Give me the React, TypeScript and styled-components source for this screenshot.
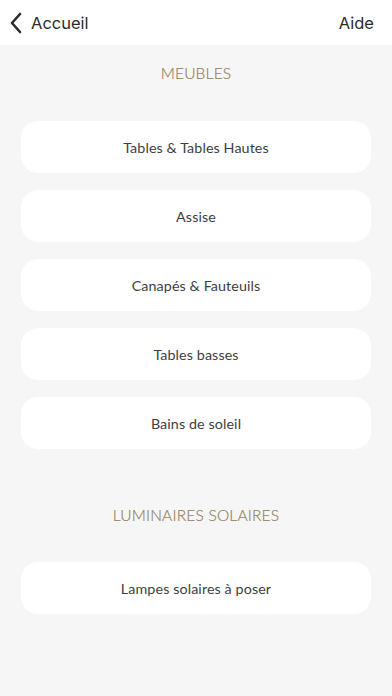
import React from "react";
import styled, { createGlobalStyle } from "styled-components";

const Global = createGlobalStyle`
  html, body { margin: 0; padding: 0; background: #f6f6f6; }
  body { font-family: "Open Sans", "Liberation Sans", sans-serif; }
  * { box-sizing: border-box; }
`;

const Page = styled.div`
  width: 392px;
  min-height: 696px;
  background: #f6f6f6;
  display: flex;
  flex-direction: column;
`;

const NavBar = styled.header`
  height: 45px;
  background: #ffffff;
  display: flex;
  align-items: center;
  justify-content: space-between;
  padding: 0 18px 0 9px;
  font-family: Inter, Roboto, "Liberation Sans", sans-serif;
  font-size: 16.5px;
  color: #2b2b2b;
`;

const BackButton = styled.div`
  display: flex;
  align-items: center;
  gap: 8px;
`;

const Section = styled.section<{ $top: number }>`
  display: flex;
  flex-direction: column;
  align-items: center;
  padding: ${(p) => p.$top}px 21px 0;
`;

const SectionTitle = styled.h2`
  margin: 0;
  height: 20px;
  line-height: 20px;
  font-family: Lato, "Open Sans", sans-serif;
  font-weight: 300;
  font-size: 15.5px;
  letter-spacing: 0.2px;
  color: #94825e;
  -webkit-text-stroke: 0.2px #94825e;
`;

const List = styled.div<{ $gap: number }>`
  margin-top: ${(p) => p.$gap}px;
  width: 100%;
  display: flex;
  flex-direction: column;
  gap: 17px;
`;

const Card = styled.div`
  height: 52px;
  border-radius: 17px;
  background: #ffffff;
  display: flex;
  align-items: center;
  justify-content: center;
  font-family: Lato, "Open Sans", sans-serif;
  font-size: 14.3px;
  color: #3e3e3e;
  letter-spacing: 0.1px;
`;

const Chevron = () => (
  <svg width="14" height="22" viewBox="0 0 14 22" fill="none">
    <path d="M11 2 L3 11 L11 20" stroke="#2b2b2b" strokeWidth="2.6" strokeLinecap="round" strokeLinejoin="round" />
  </svg>
);

const meubles = [
  "Tables & Tables Hautes",
  "Assise",
  "Canapés & Fauteuils",
  "Tables basses",
  "Bains de soleil",
];

export default function App() {
  return (
    <Page>
      <Global />
      <NavBar>
        <BackButton>
          <Chevron />
          <span>Accueil</span>
        </BackButton>
        <span>Aide</span>
      </NavBar>
      <Section $top={18}>
        <SectionTitle>MEUBLES</SectionTitle>
        <List $gap={38}>
          {meubles.map((m) => (
            <Card key={m}>{m}</Card>
          ))}
        </List>
      </Section>
      <Section $top={56}>
        <SectionTitle>LUMINAIRES SOLAIRES</SectionTitle>
        <List $gap={37}>
          <Card>Lampes solaires à poser</Card>
        </List>
      </Section>
    </Page>
  );
}
